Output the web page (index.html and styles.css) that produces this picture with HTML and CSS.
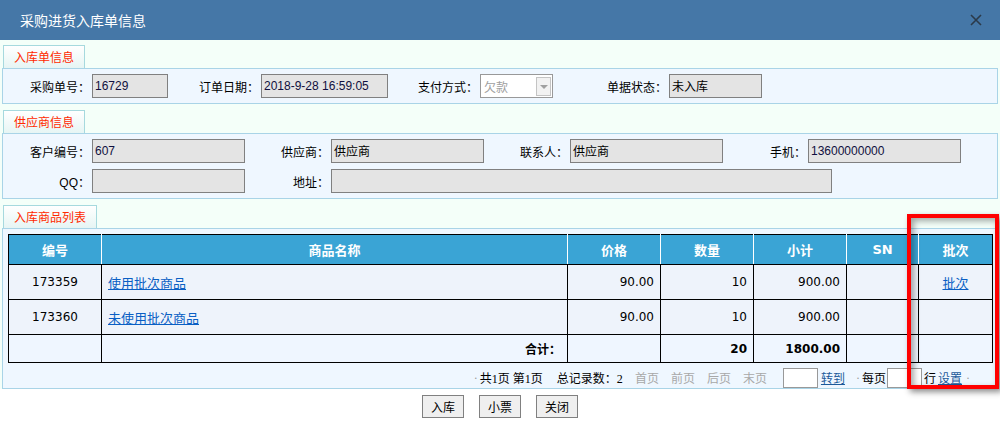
FILE: index.html
```html
<!DOCTYPE html>
<html lang="zh-CN">
<head>
    <meta charset="UTF-8">
    <title>采购进货入库单信息</title>
    <link rel="stylesheet" href="styles.css">
</head>
<body>
    <div class="titlebar">
        <span class="title">采购进货入库单信息</span>
        <svg class="close" width="12" height="12" viewBox="0 0 12 12">
            <path d="M1 1L11 11M11 1L1 11" stroke="#2b3a4a" stroke-width="1.6" fill="none"/>
        </svg>
    </div>

    <div class="content">
        <div class="tab">入库单信息</div>
        <div class="panel">
            <div class="row grid-order">
                <label>采购单号：</label>
                <div class="field num">16729</div>
                <label>订单日期：</label>
                <div class="field num">2018-9-28 16:59:05</div>
                <label>支付方式：</label>
                <div class="select">
                    <span>欠款</span>
                    <span class="arrow"></span>
                </div>
                <label>单据状态：</label>
                <div class="field">未入库</div>
            </div>
        </div>

        <div class="tab">供应商信息</div>
        <div class="panel">
            <div class="row grid-supplier">
                <label>客户编号：</label>
                <div class="field num">607</div>
                <label>供应商：</label>
                <div class="field">供应商</div>
                <label>联系人：</label>
                <div class="field">供应商</div>
                <label>手机：</label>
                <div class="field num">13600000000</div>
            </div>
            <div class="row grid-supplier">
                <label class="num-label">QQ：</label>
                <div class="field"></div>
                <label>地址：</label>
                <div class="field wide"></div>
            </div>
        </div>

        <div class="tab">入库商品列表</div>
        <div class="panel panel-list">
            <table class="goods">
                <colgroup>
                    <col style="width:93px">
                    <col style="width:466px">
                    <col style="width:93px">
                    <col style="width:93px">
                    <col style="width:93px">
                    <col style="width:72px">
                    <col style="width:74px">
                </colgroup>
                <thead>
                    <tr>
                        <th>编号</th>
                        <th>商品名称</th>
                        <th>价格</th>
                        <th>数量</th>
                        <th>小计</th>
                        <th>SN</th>
                        <th>批次</th>
                    </tr>
                </thead>
                <tbody>
                    <tr>
                        <td class="c">173359</td>
                        <td class="l"><a href="#">使用批次商品</a></td>
                        <td class="r">90.00</td>
                        <td class="r">10</td>
                        <td class="r">900.00</td>
                        <td></td>
                        <td class="c"><a href="#">批次</a></td>
                    </tr>
                    <tr>
                        <td class="c">173360</td>
                        <td class="l"><a href="#">未使用批次商品</a></td>
                        <td class="r">90.00</td>
                        <td class="r">10</td>
                        <td class="r">900.00</td>
                        <td></td>
                        <td></td>
                    </tr>
                    <tr class="total">
                        <td></td>
                        <td class="r"><b>合计：</b></td>
                        <td></td>
                        <td class="r"><b>20</b></td>
                        <td class="r"><b>1800.00</b></td>
                        <td></td>
                        <td></td>
                    </tr>
                </tbody>
            </table>

            <div class="pager">
                <span class="dot">·</span><span class="first">共1页 第1页</span>
                <span class="count">总记录数：2</span>
                <span class="off">首页</span>
                <span class="off">前页</span>
                <span class="off">后页</span>
                <span class="off">末页</span>
                <input class="page-input goto" type="text">
                <a href="#" class="go">转到</a>
                <span class="dot per-dot">·</span><span class="per">每页</span><input class="page-input size" type="text"><span class="unit">行</span>
                <a href="#" class="go set">设置</a><span class="dot end">·</span>
            </div>
        </div>
    </div>

    <div class="buttons">
        <button class="btn">入库</button>
        <button class="btn">小票</button>
        <button class="btn">关闭</button>
    </div>

    <div class="mark"></div>
</body>
</html>
```

FILE: styles.css
```css
* {
    margin: 0;
    padding: 0;
    box-sizing: border-box;
}

body {
    width: 1000px;
    height: 428px;
    overflow: hidden;
    position: relative;
    background: #fff;
    font-family: 'Noto Sans CJK SC', sans-serif;
    font-size: 12px;
    color: #000;
}

.titlebar {
    height: 40px;
    background: #4577a7;
    display: flex;
    align-items: center;
    justify-content: space-between;
    padding: 0 18px 0 20px;
}

.title {
    color: #fff;
    font-size: 14px;
    line-height: 1;
}

.close {
    display: block;
}

.content {
    background: #f4fff9;
    padding-top: 5px;
}

.tab {
    display: inline-block;
    margin-left: 3px;
    height: 23px;
    padding: 0 10px;
    line-height: 22px;
    color: #ff2a00;
    font-size: 12px;
    border: 1px solid #a6d9de;
    border-bottom: none;
    background: linear-gradient(#ffffff, #e6f5f4);
    vertical-align: bottom;
}

.panel {
    margin: 0 2px 6px;
    border: 1px solid #a9d4e7;
    background: #eff7ff;
    padding: 5px 0;
}

.row {
    display: grid;
    align-items: center;
    height: 24px;
}

.row + .row {
    margin-top: 6px;
}

.grid-order {
    grid-template-columns: 89px 76px 93px 127px 92px 73px 116px 93px;
}

.grid-supplier {
    grid-template-columns: 89px 153px 86px 153px 86px 153px 85px 153px;
}

.row label {
    text-align: right;
    padding-right: 2px;
    white-space: nowrap;
}

.num-label {
    font-family: 'Liberation Sans', 'Noto Sans CJK SC', sans-serif;
}

.field {
    height: 24px;
    border: 1px solid #808080;
    background: #e4e4e4;
    padding-left: 2px;
    line-height: 22px;
    white-space: nowrap;
    overflow: hidden;
}

.field.num {
    font-family: 'Liberation Sans', sans-serif;
    color: #101040;
}

.field.wide {
    grid-column: 4 / 7;
    width: 501px;
}

.select {
    height: 24px;
    border: 1px solid #999;
    background: #fff;
    color: #a0a0a0;
    display: flex;
    align-items: center;
    justify-content: space-between;
    padding: 0 1px 0 3px;
}

.arrow {
    width: 15px;
    height: 19px;
    border: 1px solid #c4c4c4;
    background: #f2f2f2;
    position: relative;
}

.arrow::after {
    content: '';
    position: absolute;
    left: 3px;
    top: 7px;
    border-left: 4px solid transparent;
    border-right: 4px solid transparent;
    border-top: 4px solid #a0a0a0;
}

.panel-list {
    margin-bottom: 0;
    padding: 5px 5px 0;
}

.goods {
    width: 984px;
    table-layout: fixed;
    border-collapse: collapse;
    font-family: 'DejaVu Sans', 'Noto Sans CJK SC', sans-serif;
    font-size: 12px;
}

.goods th {
    height: 30px;
    background: #3aa4d5;
    color: #fff;
    font-size: 13px;
    font-weight: bold;
    border: 1px solid #fff;
    border-top-color: #000;
    border-bottom-color: #000;
}

.goods th:first-child {
    border-left-color: #000;
}

.goods th:last-child {
    border-right-color: #000;
}

.goods td {
    height: 35px;
    border: 1px solid #000;
    background: #eef3fb;
    padding: 0 6px;
}

.goods .total td {
    height: 28px;
    background: #eff6ff;
}

.goods .c {
    text-align: center;
}

.goods .l {
    text-align: left;
}

.goods .r {
    text-align: right;
}

.goods b {
    font-weight: bold;
}

.goods a {
    color: #0a5fc4;
    font-size: 13px;
    font-family: 'Noto Sans CJK SC', sans-serif;
}

.pager {
    display: flex;
    justify-content: flex-end;
    align-items: center;
    height: 20px;
    margin-top: 5px;
    padding-right: 20px;
    font-family: 'Liberation Serif', 'Noto Sans CJK SC', serif;
    font-size: 12px;
    white-space: nowrap;
}

.pager .dot {
    color: #999;
    margin-right: 2px;
}

.pager .count {
    margin-left: 14px;
}

.pager .off {
    color: #a8a8a8;
    margin-left: 12px;
}

.pager .go {
    color: #1c5a9a;
    margin-left: 3px;
}

.pager .per-dot {
    margin-left: 11px;
}

.pager .unit {
    margin-left: 2px;
}

.pager .set {
    margin-left: 2px;
    margin-right: 4px;
}

.page-input {
    width: 35px;
    height: 20px;
    border: 1px solid #999;
    background: #fff;
}

.page-input.goto {
    margin-left: 16px;
}

.page-input.size {
    margin-left: 1px;
}

.buttons {
    display: flex;
    justify-content: center;
    gap: 15px;
    margin-top: 6px;
}

.btn {
    width: 42px;
    height: 23px;
    border: 1px solid #808080;
    background: #efefef;
    font-family: 'Noto Sans CJK SC', sans-serif;
    font-size: 12px;
    color: #000;
}

.mark {
    position: absolute;
    left: 907px;
    top: 214px;
    width: 92px;
    height: 175px;
    border: 4px solid #ff0000;
    box-shadow: 3px 3px 6px rgba(0, 0, 0, 0.45), inset 3px 3px 6px rgba(0, 0, 0, 0.35);
}
```
